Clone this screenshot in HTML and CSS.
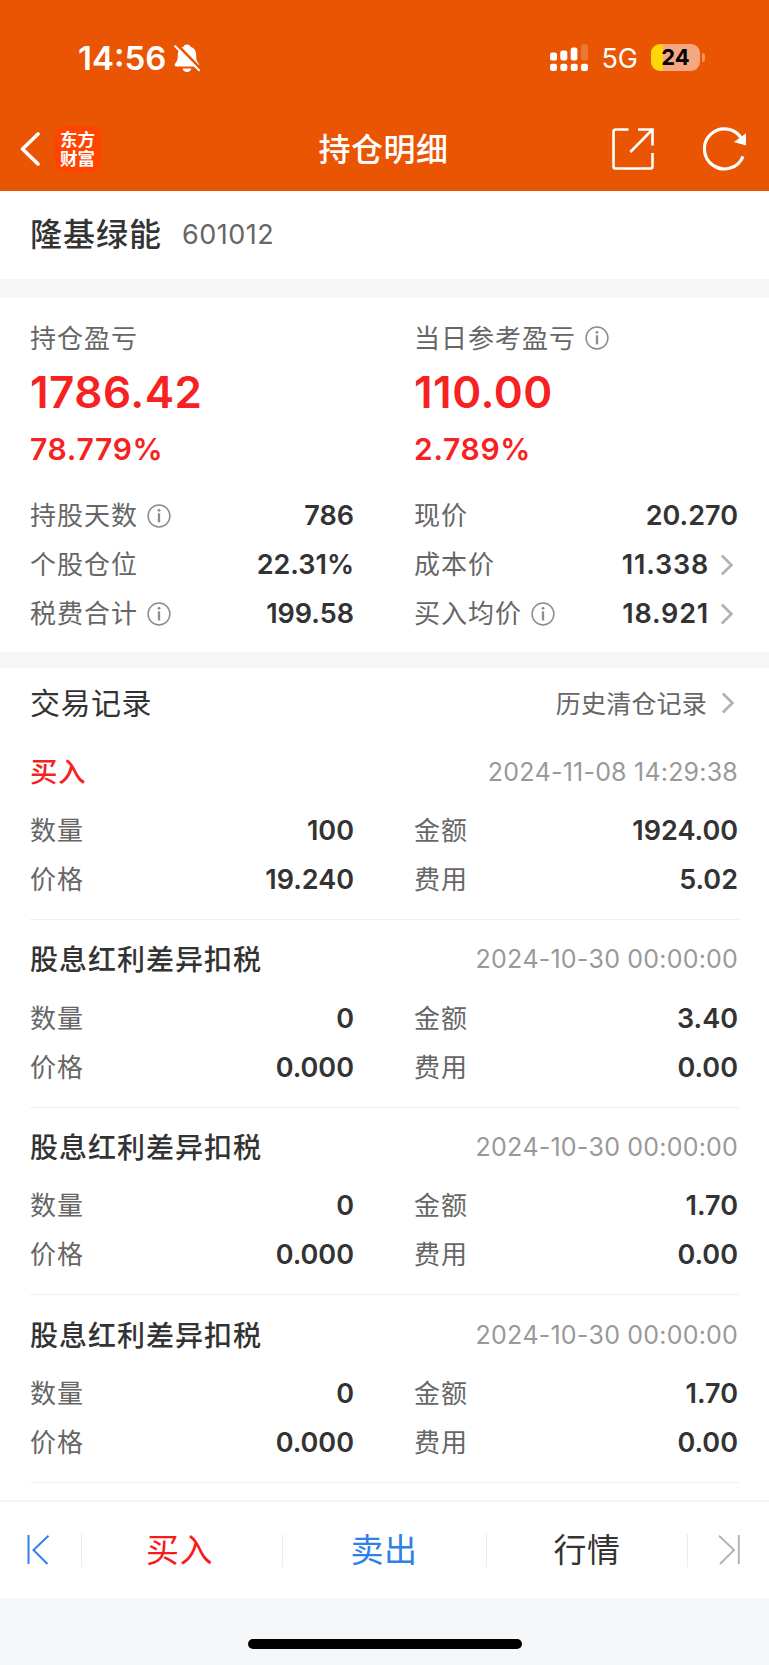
FILE: index.html
```html
<!DOCTYPE html>
<html lang="zh-CN">

<head>
    <meta charset="UTF-8">
    <meta name="viewport" content="width=device-width, initial-scale=1.0">
    <title>持仓明细</title>
    <link rel="stylesheet" href="styles.css">
</head>

<body>
    <!-- shared icons -->
    <svg class="sprite">
        <symbol id="info" viewBox="0 0 24 24">
            <circle cx="12" cy="12" r="10.9" fill="none" stroke="#8c8c8c" stroke-width="1.5" />
            <circle cx="12" cy="6.3" r="1.4" fill="#8c8c8c" />
            <path d="M12 9.3V18.4" stroke="#8c8c8c" stroke-width="2.3" />
        </symbol>
        <symbol id="arrow" viewBox="0 0 14 22">
            <path d="M1.8 1.5L11.4 11L1.8 20.5" fill="none" stroke="#b2b2b2" stroke-width="2.7" />
        </symbol>
    </svg>

    <header class="header">
        <div class="status-bar">
            <div class="status-left">
                <span class="time">14:56</span>
                <svg class="bell" viewBox="0 0 26 28">
                    <path d="M13 .5c1.700 0 3 .9 3.500 2.200 3.700 1.200 5.700 4.300 5.700 8.300 0 5.500 1 6.700 2.400 8.500.9 1.200.7 3-.8 3H2c-1.500 0-1.700-1.800-.8-3 1.400-1.800 2.600-3 2.600-8.500 0-4 2-7.100 5.700-8.300C10 1.400 11.300.5 13 .5z" fill="#fff" />
                    <path d="M8.600 24.500h8.800c-.4 2.200-2.200 3.400-4.400 3.400s-4-1.200-4.400-3.400z" fill="#fff" />
                    <path d="M2.600 0L26.500 24.600" stroke="#ea5504" stroke-width="2.600" />
                    <path d="M1.200 2.200L25 26.300" stroke="#fff" stroke-width="2" stroke-linecap="round" />
                </svg>
            </div>
            <div class="status-right">
                <svg class="signal" viewBox="0 0 39 28" fill="#fff">
                    <rect x="0" y="8.600" width="7" height="8" rx="2.200" />
                    <rect x="10.300" y="6.500" width="7" height="10" rx="2.200" />
                    <rect x="20.700" y="3.500" width="6.700" height="13" rx="2.200" />
                    <rect x="31" y="0.300" width="7" height="16.300" rx="2.200" opacity=".2" />
                    <rect x="0" y="19.700" width="7" height="7.300" rx="2.300" />
                    <rect x="10.300" y="19.700" width="7" height="7.300" rx="2.300" />
                    <rect x="20.700" y="19.700" width="7" height="7.300" rx="2.300" />
                    <rect x="31" y="19.700" width="7" height="7.300" rx="2.300" />
                </svg>
                <span class="network">5G</span>
                <div class="battery">24</div>
                <i class="battery-cap"></i>
            </div>
        </div>
        <nav class="nav-bar">
            <div class="nav-left">
                <svg class="back" viewBox="0 0 20 34">
                    <path d="M18 2L2.500 17L18 32" fill="none" stroke="#fff" stroke-width="3.600" stroke-linecap="round" stroke-linejoin="round" />
                </svg>
                <div class="logo">东方财富</div>
            </div>
            <h1 class="nav-title">持仓明细</h1>
            <div class="nav-right">
                <svg class="share" viewBox="0 0 42 42" fill="none" stroke="#fff" stroke-width="2.600">
                    <path d="M16.500 1.500H3.500a2 2 0 0 0-2 2V38.500a2 2 0 0 0 2 2H38.500a2 2 0 0 0 2-2V25" />
                    <path d="M26 1.500H40.500V17.500M40 2L18.300 24" />
                </svg>
                <svg class="refresh" viewBox="0 0 44 44">
                    <path d="M38.800 12A20 20 0 1 0 40 29.300" fill="none" stroke="#fff" stroke-width="3.200" />
                    <path d="M43 6.200V18.400L31 15z" fill="#fff" />
                </svg>
            </div>
        </nav>
    </header>

    <section class="stock">
        <span class="stock-name">隆基绿能</span>
        <span class="stock-code">601012</span>
    </section>

    <section class="position">
        <div class="col">
            <div class="label summary-label"><span>持仓盈亏</span></div>
            <div class="profit">1786.42</div>
            <div class="percent">78.779%</div>
            <div class="row"><span class="label">持股天数</span><svg class="info"><use href="#info" /></svg><span class="value">786</span></div>
            <div class="row"><span class="label">个股仓位</span><span class="value">22.31%</span></div>
            <div class="row"><span class="label">税费合计</span><svg class="info"><use href="#info" /></svg><span class="value">199.58</span></div>
        </div>
        <div class="col">
            <div class="label summary-label"><span>当日参考盈亏</span><svg class="info"><use href="#info" /></svg></div>
            <div class="profit">110.00</div>
            <div class="percent">2.789%</div>
            <div class="row"><span class="label">现价</span><span class="value">20.270</span></div>
            <div class="row"><span class="label">成本价</span><span class="value value-link">11.338</span><svg class="arrow"><use href="#arrow" /></svg></div>
            <div class="row"><span class="label">买入均价</span><svg class="info"><use href="#info" /></svg><span class="value value-link">18.921</span><svg class="arrow"><use href="#arrow" /></svg></div>
        </div>
    </section>

    <section class="records">
        <div class="records-head">
            <h2>交易记录</h2>
            <a class="history"><span>历史清仓记录</span><svg class="arrow"><use href="#arrow" /></svg></a>
        </div>

        <div class="record">
            <div class="record-head"><span class="record-type buy">买入</span><span class="date">2024-11-08 14:29:38</span></div>
            <div class="record-grid">
                <div class="row"><span class="label">数量</span><span class="value">100</span></div>
                <div class="row"><span class="label">金额</span><span class="value">1924.00</span></div>
                <div class="row"><span class="label">价格</span><span class="value">19.240</span></div>
                <div class="row"><span class="label">费用</span><span class="value">5.02</span></div>
            </div>
        </div>

        <div class="record">
            <div class="record-head"><span class="record-type">股息红利差异扣税</span><span class="date">2024-10-30 00:00:00</span></div>
            <div class="record-grid">
                <div class="row"><span class="label">数量</span><span class="value">0</span></div>
                <div class="row"><span class="label">金额</span><span class="value">3.40</span></div>
                <div class="row"><span class="label">价格</span><span class="value">0.000</span></div>
                <div class="row"><span class="label">费用</span><span class="value">0.00</span></div>
            </div>
        </div>

        <div class="record">
            <div class="record-head"><span class="record-type">股息红利差异扣税</span><span class="date">2024-10-30 00:00:00</span></div>
            <div class="record-grid">
                <div class="row"><span class="label">数量</span><span class="value">0</span></div>
                <div class="row"><span class="label">金额</span><span class="value">1.70</span></div>
                <div class="row"><span class="label">价格</span><span class="value">0.000</span></div>
                <div class="row"><span class="label">费用</span><span class="value">0.00</span></div>
            </div>
        </div>

        <div class="record">
            <div class="record-head"><span class="record-type">股息红利差异扣税</span><span class="date">2024-10-30 00:00:00</span></div>
            <div class="record-grid">
                <div class="row"><span class="label">数量</span><span class="value">0</span></div>
                <div class="row"><span class="label">金额</span><span class="value">1.70</span></div>
                <div class="row"><span class="label">价格</span><span class="value">0.000</span></div>
                <div class="row"><span class="label">费用</span><span class="value">0.00</span></div>
            </div>
        </div>
    </section>

    <footer class="tab-bar">
        <a class="tab">
            <svg class="step" viewBox="0 0 24 30" fill="none" stroke="#2f80e8" stroke-width="2">
                <path d="M2.500 0V29M22.500 .8L7.500 15L21.500 29" />
            </svg>
        </a>
        <a class="tab tab-buy"><span>买入</span></a>
        <a class="tab tab-sell"><span>卖出</span></a>
        <a class="tab"><span>行情</span></a>
        <a class="tab">
            <svg class="step" viewBox="0 0 24 30" fill="none" stroke="#b4b4b4" stroke-width="2">
                <path d="M21.800 0V29M2 .8L17 15L3 29" />
            </svg>
        </a>
    </footer>
    <div class="home-area"><div class="home-indicator"></div></div>
</body>

</html>
```
FILE: styles.css
```css
* {
    margin: 0;
    padding: 0;
    box-sizing: border-box;
}

body {
    width: 769px;
    height: 1665px;
    overflow: hidden;
    font-family: "Noto Sans CJK SC", sans-serif;
    background: #f6f7f9;
    color: #333;
    line-height: 1;
}

.sprite {
    display: none;
}

.header {
    height: 191px;
    background: #ea5504;
    color: #fff;
}

.status-bar {
    display: flex;
    justify-content: space-between;
    height: 106px;
    padding: 9px 64px 0 78px;
}

.status-left,
.status-right {
    display: flex;
    align-items: center;
    font-family: Inter, sans-serif;
}

.time {
    padding-top: 1px;
    font-size: 33px;
    font-weight: 600;
}

.bell {
    width: 26px;
    height: 28px;
    margin-left: 8px;
}

.signal {
    width: 39px;
    height: 28px;
    margin-right: 12px;
}

.network {
    font-size: 27px;
    margin-top: 1px;
}

.battery {
    width: 49px;
    height: 27px;
    margin-left: 13px;
    border-radius: 9px;
    background: linear-gradient(to right, #ffd60a 11.500px, #f5a780 11.500px);
    color: #000;
    font-size: 22px;
    font-weight: 700;
    line-height: 27px;
    text-align: center;
}

.battery-cap {
    width: 3px;
    height: 9px;
    margin-left: 2px;
    border-radius: 0 4px 4px 0;
    background: #f29465;
}

.nav-bar {
    display: grid;
    grid-template-columns: 1fr auto 1fr;
    align-items: center;
    height: 85px;
    padding: 0 22px 0 20px;
}

.nav-left,
.nav-right {
    display: flex;
    align-items: center;
}

.nav-right {
    justify-content: flex-end;
}

.back {
    width: 20px;
    height: 34px;
}

.logo {
    width: 46px;
    height: 46px;
    margin-left: 15px;
    padding: 3px 5px 0;
    border-radius: 9px;
    background: #ff4400;
    font-size: 17.500px;
    font-weight: 700;
    line-height: 19px;
    word-break: break-all;
}

.nav-title {
    padding-bottom: 4px;
    font-size: 32px;
    font-weight: 500;
    letter-spacing: 0.500px;
}

.share {
    width: 42px;
    height: 42px;
}

.refresh {
    width: 44px;
    height: 44px;
    margin-left: 49px;
}

.stock {
    display: flex;
    align-items: center;
    height: 88px;
    padding: 0 30px;
    background: #fff;
}

.stock-name {
    padding-bottom: 6px;
    font-size: 32px;
    font-weight: 500;
    letter-spacing: 1px;
}

.stock-code {
    margin-left: 20px;
    padding-bottom: 1px;
    font-family: Inter, sans-serif;
    font-size: 27px;
    letter-spacing: 0.500px;
    color: #666;
}

.position {
    display: grid;
    grid-template-columns: 324px 324px;
    column-gap: 60px;
    height: 354px;
    margin: 19px 0 16px;
    padding: 16px 30px 0;
    background: #fff;
}

.label {
    padding-bottom: 3px;
    font-size: 26px;
    letter-spacing: 1px;
    color: #666;
}

.summary-label {
    display: flex;
    align-items: center;
    height: 48px;
    padding-bottom: 1px;
}

.summary-label span {
    padding-bottom: 2px;
}

.profit {
    height: 60px;
    font: 600 44px/60px Inter, sans-serif;
    letter-spacing: 0.500px;
    color: #f62222;
}

.percent {
    height: 54px;
    margin-bottom: 15px;
    font: 600 30px/55px Inter, sans-serif;
    letter-spacing: 0.700px;
    color: #f62222;
}

.row {
    display: flex;
    align-items: center;
    height: 49px;
}

.info {
    width: 24px;
    height: 24px;
    margin-left: 9px;
}

.value {
    margin-left: auto;
    font: 600 27px/49px Inter, sans-serif;
}

.value-link {
    letter-spacing: 0.800px;
}

.arrow {
    width: 14px;
    height: 22px;
    margin: 0 4px 0 11px;
}

.records {
    height: 832px;
    padding: 0 30px;
    background: #fff;
}

.records-head {
    display: flex;
    align-items: center;
    justify-content: space-between;
    height: 64.500px;
    padding-top: 6px;
}

.records-head h2 {
    padding-bottom: 4px;
    font-size: 30px;
    font-weight: 400;
    letter-spacing: 0.500px;
}

.history {
    display: flex;
    align-items: center;
    font-size: 25px;
    letter-spacing: 0.200px;
    color: #666;
}

.history span {
    padding: 0 3px 2px 0;
}

.record {
    height: 187.600px;
    padding-top: 6px;
    border-bottom: 1px solid #f0f0f1;
}

.record-head {
    display: flex;
    align-items: center;
    justify-content: space-between;
    height: 67.500px;
}

.record-type {
    padding-bottom: 3px;
    font-size: 28px;
    font-weight: 500;
    letter-spacing: 1px;
}

.buy {
    font-size: 27.500px;
    letter-spacing: 0.500px;
    color: #f62222;
}

.date {
    padding-right: 1px;
    font-family: Inter, sans-serif;
    font-size: 25px;
    font-kerning: none;
    letter-spacing: 0.200px;
    color: #999;
}

.record-grid {
    display: grid;
    grid-template-columns: 324px 324px;
    column-gap: 60px;
}

.tab-bar {
    display: grid;
    grid-template-columns: 81px 201px 204px 201px 82px;
    align-items: center;
    height: 98px;
    border-top: 2px solid #f5f6f7;
    background: #fff;
}

.tab {
    display: flex;
    align-items: center;
    justify-content: center;
    height: 33px;
    font-size: 33px;
    letter-spacing: 0.500px;
}

.tab span {
    padding-bottom: 4px;
}

.tab + .tab {
    border-left: 1px solid #ececec;
}

.tab-buy {
    padding-right: 5px;
    color: #fa1919;
}

.tab-sell {
    padding-right: 1px;
    color: #2f80e8;
}

.step {
    width: 24px;
    height: 30px;
}

.tab:first-child .step {
    margin-right: 5px;
}

.home-area {
    display: flex;
    justify-content: center;
    height: 67px;
    padding-top: 41px;
}

.home-indicator {
    width: 274px;
    height: 10px;
    border-radius: 5px;
    background: #000;
}
```
